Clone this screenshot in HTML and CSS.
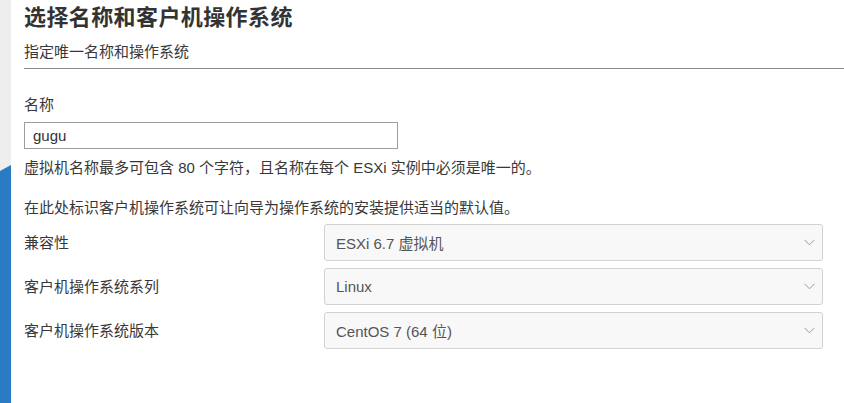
FILE: index.html
```html
<!DOCTYPE html>
<html lang="zh-CN">
<head>
<meta charset="utf-8">
<title>选择名称和客户机操作系统</title>
<link rel="stylesheet" href="styles.css">
</head>
<body>
<div class="page">
  <div class="side"><div class="side-blue"></div></div>
  <div class="main">
    <div class="header">
      <h1 class="title">选择名称和客户机操作系统</h1>
      <div class="subtitle">指定唯一名称和操作系统</div>
    </div>
    <div class="form">
      <div class="field-label">名称</div>
      <div class="input">gugu</div>
      <div class="help">虚拟机名称最多可包含 80 个字符，且名称在每个 ESXi 实例中必须是唯一的。</div>
      <div class="para">在此处标识客户机操作系统可让向导为操作系统的安装提供适当的默认值。</div>
      <div class="rows">
        <div class="row-label">兼容性</div>
        <div class="select"><span>ESXi 6.7 虚拟机</span><svg class="chev" width="11" height="7" viewBox="0 0 11 7"><path d="M0.5 0.8 L5.5 5.8 L10.5 0.8" fill="none" stroke="#9a9a9a" stroke-width="1"/></svg></div>
        <div class="row-label">客户机操作系统系列</div>
        <div class="select"><span>Linux</span><svg class="chev" width="11" height="7" viewBox="0 0 11 7"><path d="M0.5 0.8 L5.5 5.8 L10.5 0.8" fill="none" stroke="#9a9a9a" stroke-width="1"/></svg></div>
        <div class="row-label">客户机操作系统版本</div>
        <div class="select"><span>CentOS 7 (64 位)</span><svg class="chev" width="11" height="7" viewBox="0 0 11 7"><path d="M0.5 0.8 L5.5 5.8 L10.5 0.8" fill="none" stroke="#9a9a9a" stroke-width="1"/></svg></div>
      </div>
    </div>
  </div>
</div>
</body>
</html>
```
FILE: styles.css
```css
html, body {
  margin: 0;
  padding: 0;
  background: #ffffff;
}
body {
  font-family: "Liberation Sans", "Noto Sans CJK SC", sans-serif;
  color: #383838;
  font-size: 15px;
}
.page {
  display: flex;
  height: 403px;
  overflow: hidden;
}
.side {
  width: 11px;
  flex: none;
  background: #eeeeee;
  display: flex;
  flex-direction: column;
}
.side-blue {
  margin-top: 165px;
  flex: 1;
  background: #2a7bc4;
  clip-path: polygon(0 6px, 100% 0, 100% 100%, 0 100%);
}
.main {
  flex: 1;
  padding-left: 13px;
}
.header {
  padding-bottom: 6px;
  border-bottom: 1px solid #8c8c8c;
}
.title {
  margin: 4px 0 0 0;
  font-size: 22px;
  font-weight: bold;
  line-height: 28px;
  letter-spacing: 0.4px;
  color: #333333;
}
.subtitle {
  margin-top: 10px;
  line-height: 20px;
}
.form {
  padding-right: 21px;
}
.field-label {
  margin-top: 26px;
  line-height: 20px;
}
.input {
  margin-top: 7px;
  box-sizing: border-box;
  width: 374px;
  height: 27px;
  border: 1px solid #9c9c9c;
  padding-left: 8px;
  line-height: 25px;
  color: #333333;
}
.help {
  margin-top: 9px;
  line-height: 20px;
}
.para {
  margin-top: 20px;
  line-height: 20px;
}
.rows {
  margin-top: 6px;
  display: grid;
  grid-template-columns: 300px 1fr;
  grid-auto-rows: 37px;
  row-gap: 7px;
  align-items: center;
}
.row-label {
  line-height: 20px;
}
.select {
  box-sizing: border-box;
  height: 37px;
  border: 1px solid #d2d2d2;
  border-radius: 3px;
  background: #f8f8f8;
  color: #555555;
  padding: 0 7px 0 11px;
  display: flex;
  align-items: center;
  justify-content: space-between;
}
.chev {
  display: block;
}
```
